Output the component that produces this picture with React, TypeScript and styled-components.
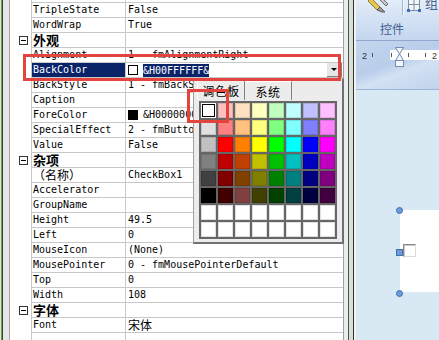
import styled, { createGlobalStyle } from "styled-components";

const NAVY = "#0a246a";
const LINE = "#c8c8c8";
const RED = "#e3443d";
const MONO = `"DejaVu Sans Mono", "Liberation Mono", monospace`;
const CJK = `"Noto Sans CJK SC", "Noto Sans CJK JP", sans-serif`;

type PropRow =
  | { kind: "category"; label: string }
  | {
      kind: "property";
      name: string;
      value?: string;
      swatch?: string;
      cjkName?: boolean;
      cjkValue?: boolean;
      selected?: boolean;
    };

const ROWS: PropRow[] = [
  { kind: "property", name: "TripleState", value: "False" },
  { kind: "property", name: "WordWrap", value: "True" },
  { kind: "category", label: "外观" },
  { kind: "property", name: "Alignment", value: "1 - fmAlignmentRight" },
  { kind: "property", name: "BackColor", value: "&H00FFFFFF&", swatch: "#ffffff", selected: true },
  { kind: "property", name: "BackStyle", value: "1 - fmBackStyleOpaque" },
  { kind: "property", name: "Caption" },
  { kind: "property", name: "ForeColor", value: "&H00000000&", swatch: "#000000" },
  { kind: "property", name: "SpecialEffect", value: "2 - fmButtonEffectSunken" },
  { kind: "property", name: "Value", value: "False" },
  { kind: "category", label: "杂项" },
  { kind: "property", name: "（名称）", value: "CheckBox1", cjkName: true },
  { kind: "property", name: "Accelerator" },
  { kind: "property", name: "GroupName" },
  { kind: "property", name: "Height", value: "49.5" },
  { kind: "property", name: "Left", value: "0" },
  { kind: "property", name: "MouseIcon", value: "(None)" },
  { kind: "property", name: "MousePointer", value: "0 - fmMousePointerDefault" },
  { kind: "property", name: "Top", value: "0" },
  { kind: "property", name: "Width", value: "108" },
  { kind: "category", label: "字体" },
  { kind: "property", name: "Font", value: "宋体", cjkValue: true },
];

const PALETTE: string[][] = [
  ["#ffffff", "#ffc0c0", "#ffe0c0", "#ffffc0", "#c0ffc0", "#c0ffff", "#c0c0ff", "#ffc0ff"],
  ["#e0e0e0", "#ff8080", "#ffc080", "#ffff80", "#80ff80", "#80ffff", "#8080ff", "#ff80ff"],
  ["#c0c0c0", "#ff0000", "#ff8000", "#ffff00", "#00ff00", "#00ffff", "#0000ff", "#ff00ff"],
  ["#808080", "#c00000", "#c04000", "#c0c000", "#00c000", "#00c0c0", "#0000c0", "#c000c0"],
  ["#404040", "#800000", "#804000", "#808000", "#008000", "#008080", "#000080", "#800080"],
  ["#000000", "#400000", "#804040", "#404000", "#004000", "#004040", "#000040", "#400040"],
  Array(8).fill("#ffffff"),
  Array(8).fill("#ffffff"),
];

const GlobalStyle = createGlobalStyle`
  html, body {
    margin: 0;
    padding: 0;
    background: #ffffff;
  }
  body {
    width: 439px;
    height: 340px;
    overflow: hidden;
  }
`;

const Screen = styled.div`
  position: relative;
  width: 439px;
  height: 340px;
  display: flex;
  overflow: hidden;
  background: #ffffff;
`;

const WindowEdge = styled.div`
  width: 10px;
  flex: none;
  background: linear-gradient(
    to right,
    #dfe8d6 0 1px,
    #6f9a55 1px 2px,
    #2e4a2a 2px 3px,
    #e6e6e6 3px 9px,
    #a8a8a8 9px 10px
  );
`;

const PropertyGrid = styled.div`
  width: 334px;
  flex: none;
  display: flex;
  flex-direction: column;
  box-sizing: border-box;
  border-right: 1px solid #a0a0a0;
  font-family: ${MONO};
  font-size: 10px;
  line-height: 14px;
  color: #000000;
`;

const GridRow = styled.div<{ $height?: number; $fill?: boolean }>`
  display: flex;
  flex: ${({ $fill }) => ($fill ? "1 1 auto" : "none")};
  height: ${({ $fill, $height }) => ($fill ? "auto" : `${$height ?? 15}px`)};
`;

const Gutter = styled.div`
  width: 21px;
  flex: none;
  box-sizing: border-box;
  padding-right: 3px;
  display: flex;
  align-items: center;
  justify-content: flex-end;
`;

const CollapseBox = styled.span`
  position: relative;
  width: 9px;
  height: 9px;
  box-sizing: border-box;
  border: 1px solid #333333;
  background: #ffffff;

  &::after {
    content: "";
    position: absolute;
    left: 1px;
    right: 1px;
    top: 3px;
    height: 1px;
    background: #000000;
  }
`;

const NameCell = styled.div<{ $selected?: boolean; $open?: boolean }>`
  width: 94px;
  flex: none;
  box-sizing: border-box;
  padding-left: 1px;
  border-left: 1px solid ${LINE};
  border-bottom: ${({ $open }) => ($open ? "none" : `1px solid ${LINE}`)};
  display: flex;
  align-items: center;
  white-space: nowrap;
  background: ${({ $selected }) => ($selected ? NAVY : "transparent")};
  color: ${({ $selected }) => ($selected ? "#ffffff" : "#000000")};
`;

const ValueCell = styled.div<{ $open?: boolean }>`
  flex: 1;
  min-width: 0;
  box-sizing: border-box;
  padding-left: 2px;
  border-left: 1px solid ${LINE};
  border-bottom: ${({ $open }) => ($open ? "none" : `1px solid ${LINE}`)};
  display: flex;
  align-items: center;
  white-space: nowrap;
  overflow: hidden;
`;

const CjkText = styled.span<{ $bold?: boolean; $size?: number }>`
  font-family: ${CJK};
  font-size: ${({ $size }) => $size ?? 12}px;
  font-weight: ${({ $bold }) => ($bold ? 700 : 400)};
  line-height: 14px;
`;

const Swatch = styled.span<{ $color: string }>`
  width: 10px;
  height: 10px;
  flex: none;
  box-sizing: border-box;
  margin-right: 5px;
  border: 1px solid #000000;
  background: ${({ $color }) => $color};
`;

const HighlightText = styled.span`
  background: ${NAVY};
  color: #ffffff;
  line-height: 13px;
`;

const DropButton = styled.div`
  margin-left: auto;
  margin-right: 1px;
  width: 15px;
  height: 14px;
  flex: none;
  box-sizing: border-box;
  background: #e6e6e6;
  border-right: 1px solid #808080;
  border-bottom: 1px solid #808080;
  display: flex;
  align-items: center;
  justify-content: center;

  &::after {
    content: "";
    border-top: 3px solid #000000;
    border-left: 3px solid transparent;
    border-right: 3px solid transparent;
  }
`;

const Splitter = styled.div`
  width: 12px;
  flex: none;
  background: linear-gradient(
    to right,
    #ececec 0 4px,
    #3f5a3f 4px 5px,
    #dcdcdc 5px 9px,
    #2c3a2c 9px 10px,
    #f2f2f2 10px 12px
  );
`;

const RightPane = styled.div`
  flex: 1;
  display: flex;
  flex-direction: column;
  min-width: 0;
`;

const Ribbon = styled.div`
  height: 40px;
  flex: none;
  border-bottom: 1px solid #8ea9cd;
  background: linear-gradient(#e4edf8 0%, #d6e3f4 40%, #c4d7ef 100%);
  display: flex;
  flex-direction: column;
  overflow: hidden;
`;

const RibbonIcons = styled.div`
  height: 16px;
  flex: none;
  display: flex;
  align-items: flex-start;
  padding-left: 12px;
`;

const RibbonSeparator = styled.span`
  width: 1px;
  height: 15px;
  margin: 0 3px 0 12px;
  background: #9fb6d6;
  box-shadow: 1px 0 0 #f4f8fd;
`;

const CutLabel = styled.span`
  margin-top: -5px;
  margin-left: 3px;
  font-family: ${CJK};
  font-size: 13px;
  line-height: 16px;
  color: #4a6590;
`;

const GroupLabel = styled.div`
  padding: 6px 0 0 24px;
  font-family: ${CJK};
  font-size: 12px;
  line-height: 14px;
  color: #3d5f90;
`;

const Ruler = styled.div`
  height: 48px;
  flex: none;
  border-bottom: 1px solid #9db5d6;
  background: linear-gradient(
    160deg,
    #c4d6ee 0%,
    #b9cdea 45%,
    #d3e1f3 62%,
    #c0d3ec 100%
  );
`;

const Canvas = styled.div`
  position: relative;
  flex: 1;
  background: #d9e9f3;
`;

const SelectedControl = styled.div`
  position: absolute;
  left: 44px;
  top: 120px;
  width: 60px;
  height: 82px;
  background: #ffffff;
`;

const CheckSquare = styled.div`
  margin: 34px 0 0 3px;
  width: 13px;
  height: 13px;
  box-sizing: border-box;
  border-top: 1px solid #8a8a8a;
  border-left: 1px solid #8a8a8a;
  border-right: 1px solid #dcdcdc;
  border-bottom: 1px solid #dcdcdc;
  box-shadow: inset 1px 1px 0 #c8c8c8;
`;

const Handle = styled.span<{ $top: number; $round?: boolean }>`
  position: absolute;
  left: 40px;
  top: ${({ $top }) => $top}px;
  width: 7px;
  height: 7px;
  box-sizing: border-box;
  border: 1px solid #3f6fb5;
  border-radius: ${({ $round }) => ($round ? "50%" : "0")};
  background: #6e9bd8;
`;

const ColorPopup = styled.div`
  position: absolute;
  left: 193px;
  top: 78px;
  width: 151px;
  box-sizing: border-box;
  border-top: 1px solid #d0d0d0;
  border-left: 1px solid #a0a0a0;
  border-right: 2px solid #707070;
  border-bottom: 2px solid #707070;
  background: #ececec;
  display: flex;
  flex-direction: column;
`;

const TabStrip = styled.div`
  height: 21px;
  display: flex;
  align-items: flex-end;
  padding-left: 3px;
`;

const Tab = styled.div<{ $active?: boolean }>`
  height: ${({ $active }) => ($active ? 21 : 19)}px;
  width: ${({ $active }) => ($active ? 48 : 47)}px;
  box-sizing: border-box;
  border-top: 1px solid #ffffff;
  border-left: ${({ $active }) => ($active ? "1px solid #ffffff" : "none")};
  border-right: 1px solid #808080;
  display: flex;
  align-items: center;
  justify-content: center;
  font-family: ${CJK};
  font-size: 12px;
  letter-spacing: 0.5px;
  color: #000000;
`;

const PopupBody = styled.div`
  padding: 1px 5px 3px 5px;
`;

const PaletteGrid = styled.div`
  display: grid;
  grid-template-columns: repeat(8, 15px);
  grid-auto-rows: 15px;
  gap: 2px;
  padding: 2px;
  background: #666666;
`;

const PaletteCell = styled.span<{ $color: string; $current?: boolean }>`
  background: ${({ $color }) => $color};
  box-shadow: ${({ $current }) =>
    $current
      ? "inset 0 0 0 1px #ffffff, inset 0 0 0 2px #000000"
      : "inset 0 0 0 1px rgba(0, 0, 0, 0.12)"};
`;

const Annotation = styled.div<{ $left: number; $top: number; $width: number; $height: number }>`
  position: absolute;
  left: ${({ $left }) => $left}px;
  top: ${({ $top }) => $top}px;
  width: ${({ $width }) => $width}px;
  height: ${({ $height }) => $height}px;
  box-sizing: border-box;
  border: 3px solid ${RED};
  pointer-events: none;
`;

const ToolIcon = () => (
  <svg width="22" height="13" viewBox="0 0 22 13">
    <path d="M3 -2 L12 7 L9 10 L0 1 Z" fill="#e9c650" stroke="#8a7a40" strokeWidth="1" />
    <path d="M12 7 L17 12 L14 12 L9 10 Z" fill="#9a9a9a" stroke="#5a5a5a" strokeWidth="1" />
    <path d="M14 -2 L20 4 L18 6 L12 0 Z" fill="#c8c8c8" stroke="#6a6a6a" strokeWidth="1" />
  </svg>
);

const GroupIcon = () => (
  <svg width="16" height="13" viewBox="0 0 16 13">
    <rect x="2.5" y="-1.5" width="11" height="12" fill="#f2f5fa" stroke="#7d8da5" />
    <line x1="2.5" y1="4.5" x2="13.5" y2="4.5" stroke="#7d8da5" />
    <line x1="8" y1="-1" x2="8" y2="10" stroke="#7d8da5" />
    <rect x="1" y="9" width="3" height="3" fill="#3b6fb8" />
    <rect x="12" y="9" width="3" height="3" fill="#3b6fb8" />
  </svg>
);

const RulerDrawing = () => (
  <svg width="83" height="48" viewBox="0 0 83 48">
    <rect x="34" y="9" width="49" height="10" fill="#ffffff" />
    <text x="6" y="18" fontFamily="Liberation Sans, sans-serif" fontSize="9" fill="#333333">
      2
    </text>
    <text x="76" y="18" fontFamily="Liberation Sans, sans-serif" fontSize="9" fill="#333333">
      2
    </text>
    {[16, 35, 52, 69].map((x) => (
      <line key={x} x1={x + 0.5} y1="12" x2={x + 0.5} y2="16" stroke="#555555" />
    ))}
    <path d="M39.5 6.5 H47.5 L43.5 13 Z" fill="#f3f6fb" stroke="#6f8db5" />
    <path d="M43.5 13 L47.5 19.5 H39.5 Z" fill="#f3f6fb" stroke="#6f8db5" />
    <rect x="39.5" y="19.5" width="8" height="6" fill="#f3f6fb" stroke="#6f8db5" />
  </svg>
);

const App = () => {
  return (
    <Screen>
      <GlobalStyle />
      <WindowEdge />
      <PropertyGrid>
        <GridRow $height={3}>
          <Gutter />
          <NameCell />
          <ValueCell />
        </GridRow>
        {ROWS.map((row, index) =>
          row.kind === "category" ? (
            <GridRow key={index}>
              <Gutter>
                <CollapseBox />
              </Gutter>
              <NameCell>
                <CjkText $bold $size={13}>
                  {row.label}
                </CjkText>
              </NameCell>
              <ValueCell />
            </GridRow>
          ) : (
            <GridRow key={index}>
              <Gutter />
              <NameCell $selected={row.selected}>
                {row.cjkName ? <CjkText>{row.name}</CjkText> : row.name}
              </NameCell>
              <ValueCell>
                {row.swatch && <Swatch $color={row.swatch} />}
                {row.selected ? (
                  <>
                    <HighlightText>{row.value}</HighlightText>
                    <DropButton />
                  </>
                ) : row.cjkValue ? (
                  <CjkText>{row.value}</CjkText>
                ) : (
                  row.value
                )}
              </ValueCell>
            </GridRow>
          )
        )}
        <GridRow $fill>
          <Gutter />
          <NameCell $open />
          <ValueCell $open />
        </GridRow>
      </PropertyGrid>
      <Splitter />
      <RightPane>
        <Ribbon>
          <RibbonIcons>
            <ToolIcon />
            <RibbonSeparator />
            <GroupIcon />
            <CutLabel>组</CutLabel>
          </RibbonIcons>
          <GroupLabel>控件</GroupLabel>
        </Ribbon>
        <Ruler>
          <RulerDrawing />
        </Ruler>
        <Canvas>
          <SelectedControl>
            <CheckSquare />
          </SelectedControl>
          <Handle $top={117} $round />
          <Handle $top={159} />
          <Handle $top={200} $round />
        </Canvas>
      </RightPane>

      <ColorPopup>
        <TabStrip>
          <Tab $active>调色板</Tab>
          <Tab>系统</Tab>
        </TabStrip>
        <PopupBody>
          <PaletteGrid>
            {PALETTE.flatMap((line, r) =>
              line.map((color, c) => (
                <PaletteCell key={`${r}-${c}`} $color={color} $current={r === 0 && c === 0} />
              ))
            )}
          </PaletteGrid>
        </PopupBody>
      </ColorPopup>

      <Annotation $left={23} $top={54} $width={318} $height={27} />
      <Annotation $left={187} $top={89} $width={42} $height={34} />
    </Screen>
  );
};

export default App;
